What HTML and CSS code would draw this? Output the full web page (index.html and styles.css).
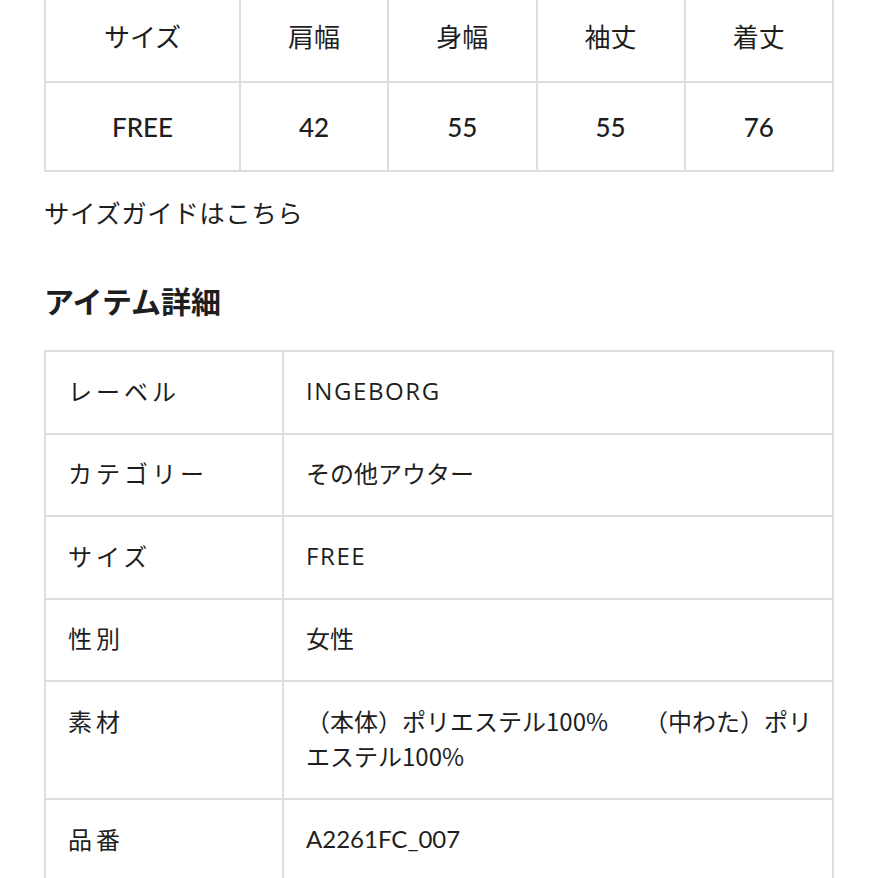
FILE: index.html
```html
<!DOCTYPE html>
<html lang="ja">
<head>
<meta charset="utf-8">
<link rel="stylesheet" href="styles.css">
</head>
<body>
<div class="page">
  <table class="size-table">
    <colgroup>
      <col class="c-first"><col><col><col><col>
    </colgroup>
    <tr class="size-head">
      <td>サイズ</td><td>肩幅</td><td>身幅</td><td>袖丈</td><td>着丈</td>
    </tr>
    <tr class="size-vals">
      <td>FREE</td><td>42</td><td>55</td><td>55</td><td>76</td>
    </tr>
  </table>
  <p class="guide">サイズガイドはこちら</p>
  <h2 class="heading">アイテム詳細</h2>
  <table class="detail-table">
    <colgroup>
      <col class="d-label"><col>
    </colgroup>
    <tr><th>レーベル</th><td class="latin">INGEBORG</td></tr>
    <tr><th>カテゴリー</th><td>その他アウター</td></tr>
    <tr><th>サイズ</th><td class="latin">FREE</td></tr>
    <tr><th>性別</th><td>女性</td></tr>
    <tr><th>素材</th><td>（本体）ポリエステル100%　　（中わた）ポリエステル100%</td></tr>
    <tr><th>品番</th><td class="num">A2261FC_007</td></tr>
  </table>
</div>
</body>
</html>
```

FILE: styles.css
```css
html, body {
  margin: 0;
  padding: 0;
  background: #fff;
}
body {
  font-family: "Noto Sans CJK JP", sans-serif;
  color: #1e1e1e;
  overflow: hidden;
}
.page {
  padding: 0 44px;
  margin-top: -9px;
}
.size-table {
  width: 790px;
  border-collapse: collapse;
  table-layout: fixed;
  border: 2px solid #ddd;
}
.size-table .c-first {
  width: 195px;
}
.size-table td {
  border: 2px solid #ddd;
  text-align: center;
  font-size: 26px;
  padding: 0;
}
.size-head td {
  height: 84px;
  padding-bottom: 4px;
}
.size-vals td {
  height: 87px;
  font-family: "Lato", "Noto Sans CJK JP", sans-serif;
  font-size: 26px;
  font-weight: 500;
}
.guide {
  margin: 20px 0 0;
  font-size: 25.5px;
  line-height: 40px;
  letter-spacing: 0.5px;
}
.heading {
  margin: 46px 0 0;
  font-size: 30px;
  font-weight: 700;
  line-height: 44px;
}
.detail-table {
  margin-top: 28px;
  width: 790px;
  border-collapse: collapse;
  table-layout: fixed;
  border: 2px solid #ddd;
}
.detail-table .d-label {
  width: 238px;
}
.detail-table th,
.detail-table td {
  border: 2px solid #ddd;
  padding: 20.5px 16px 24.5px 22px;
  text-align: left;
  vertical-align: top;
  font-size: 24px;
  font-weight: 400;
  line-height: 35.5px;
}
.detail-table th {
  letter-spacing: 4px;
}
.latin {
  font-family: "Open Sans", "Noto Sans CJK JP", sans-serif;
  letter-spacing: 1.6px;
}
.num {
  font-family: "Lato", "Noto Sans CJK JP", sans-serif;
}
```
